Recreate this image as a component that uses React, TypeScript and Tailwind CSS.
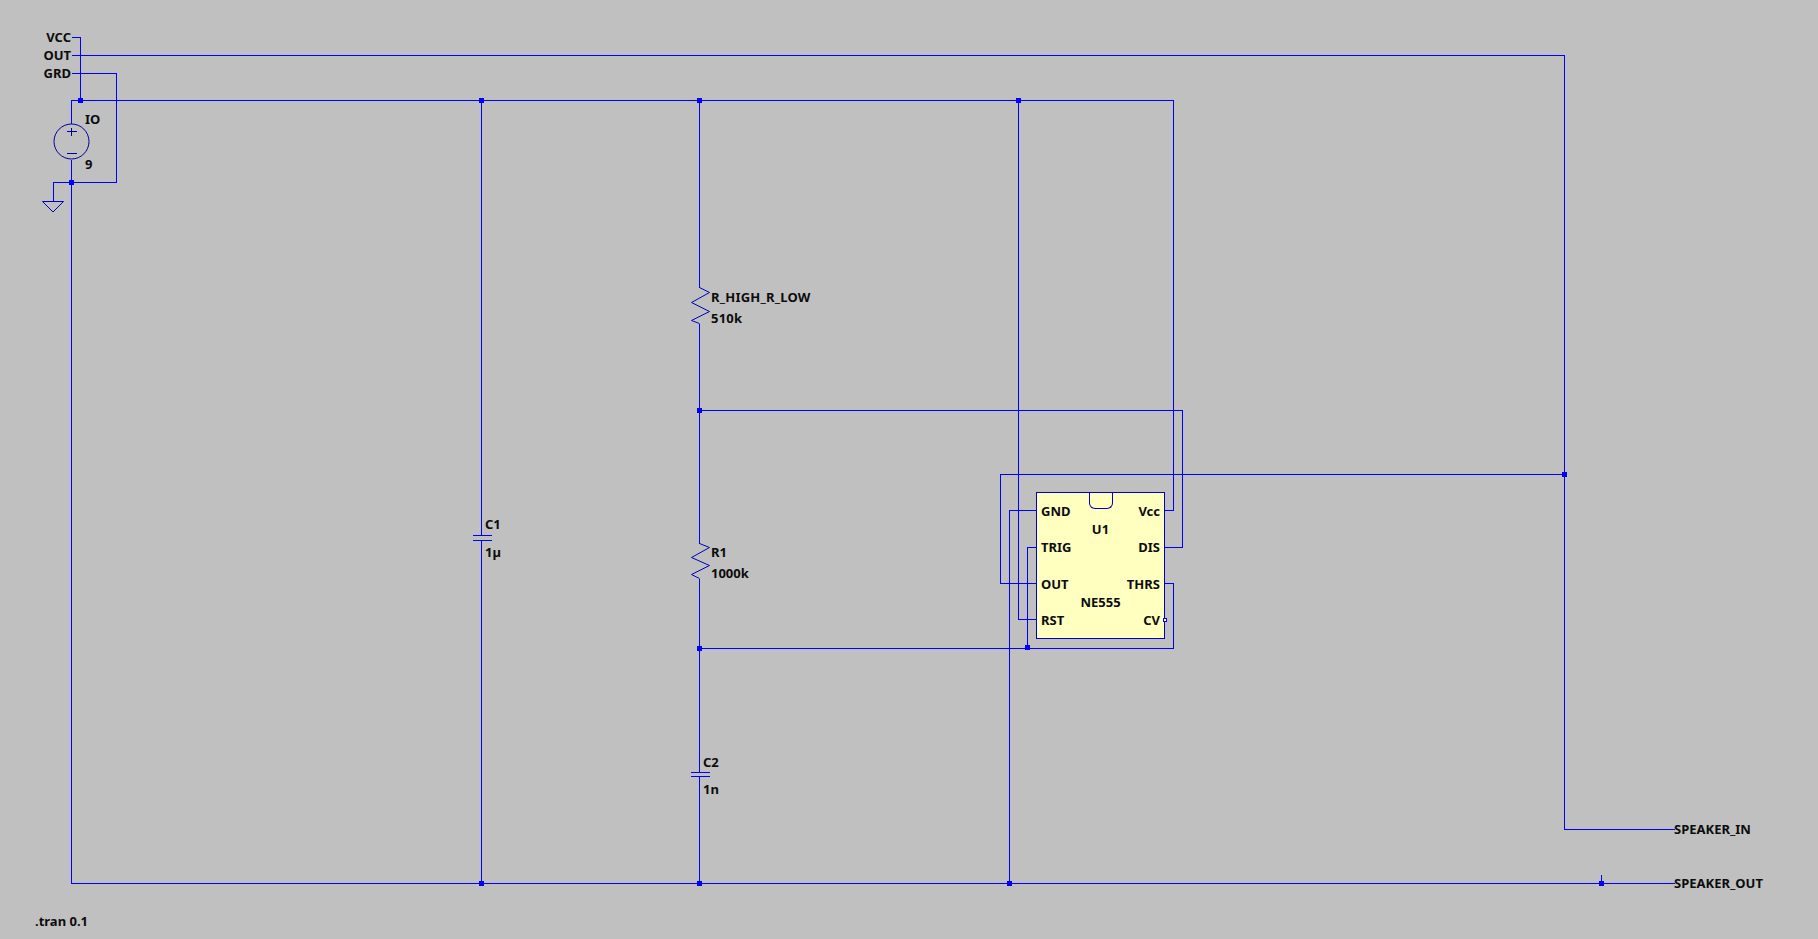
import type { ReactNode } from "react";

// wires as orthogonal polylines, in schematic pixels
const wires = [
  "M71 37H80V100",
  "M71 55H1564V829H1674",
  "M71 73H116V182H53V201",
  "M71 123V100H1173V510H1164",
  "M71 159V883H1674",
  "M481 100V535",
  "M481 540V883",
  "M699 100V287",
  "M699 323V543",
  "M699 578V772",
  "M699 776V883",
  "M1018 100V619H1036",
  "M1036 510H1009V883",
  "M1036 547H1027V647",
  "M1036 583H1000V474H1564",
  "M1164 547H1182V410H699",
  "M1164 583H1173V648H699",
  "M1601 874V883",
  "M472 535H491M472 540H491",
  "M690 772H709M690 776H709",
];

const junctions = [
  [80, 100],
  [481, 100],
  [699, 100],
  [1018, 100],
  [71, 182],
  [699, 410],
  [1564, 474],
  [699, 648],
  [1027, 647],
  [481, 883],
  [699, 883],
  [1009, 883],
  [1601, 883],
];

// part name + value, stacked next to the symbol
const Part = ({ className, lines }: { className: string; lines: string[] }) => (
  <div className={`absolute flex flex-col ${className}`}>
    {lines.map((line) => (
      <span key={line} className="whitespace-nowrap">
        {line}
      </span>
    ))}
  </div>
);

const ChipRow = ({ children }: { children: ReactNode }) => (
  <div className="flex h-[18.25px] items-center justify-between">{children}</div>
);

const Chip = () => (
  <div className="absolute left-[1036px] top-[492px] h-[147px] w-[129px] border border-[#0000c0] bg-[#ffffc0] pl-1 pr-[4px] pt-[8.5px]">
    <div className="absolute left-[52px] top-0 h-[16px] w-[24px] rounded-b-[6px] border border-t-0 border-[#0000c0]" />
    <ChipRow>
      <span>GND</span>
      <span>Vcc</span>
    </ChipRow>
    <ChipRow>
      <span className="w-full text-center">U1</span>
    </ChipRow>
    <ChipRow>
      <span>TRIG</span>
      <span>DIS</span>
    </ChipRow>
    <ChipRow>{null}</ChipRow>
    <ChipRow>
      <span>OUT</span>
      <span>THRS</span>
    </ChipRow>
    <ChipRow>
      <span className="w-full text-center">NE555</span>
    </ChipRow>
    <ChipRow>
      <span>RST</span>
      <span>CV</span>
    </ChipRow>
  </div>
);

const Schematic = () => (
  <svg width="1818" height="939" viewBox="0 0 1818 939" className="absolute inset-0" fill="none">
    <rect x="1163.5" y="618.5" width="3" height="3" fill="#ffffc0" stroke="#0000ff" shapeRendering="crispEdges" />

    <g stroke="#0000ff" shapeRendering="crispEdges" transform="translate(0.5 0.5)">
      {wires.map((d) => (
        <path key={d} d={d} />
      ))}
    </g>

    {/* resistors */}
    <g stroke="#0000c0" transform="translate(0.5 0.5)">
      <path d="M699 287L709 292L691 302L709 311L691 320L699 323" />
      <path d="M699 543L709 547L691 557L709 565L691 574L699 578" />
    </g>

    {/* voltage source */}
    <g stroke="#0000a0" transform="translate(0.5 0.5)">
      <circle cx="71" cy="141" r="17.5" />
      <path d="M66 131H76M71 127V135M66 153H76" shapeRendering="crispEdges" />
    </g>

    {/* ground */}
    <path d="M42.5 201.5H63.5L53 212Z" stroke="#0000c0" />

    <g fill="#0000ff">
      {junctions.map(([x, y]) => (
        <rect key={`${x}-${y}`} x={x - 2} y={y - 2} width="5" height="5" />
      ))}
    </g>
  </svg>
);

const App = () => {
  return (
    <div className="relative h-[939px] w-[1818px] overflow-hidden bg-[#c0c0c0] font-['Noto_Sans',sans-serif] text-[13px] leading-[18px] font-bold text-[#0c0c0c]">
      <Chip />
      <Schematic />

      <Part className="right-[1747px] top-[28px] items-end" lines={["VCC", "OUT", "GRD"]} />
      <Part className="left-[85px] top-[110px] gap-[27px]" lines={["IO", "9"]} />
      <Part className="left-[711px] top-[288px] gap-[3px] tracking-[0.2px]" lines={["R_HIGH_R_LOW", "510k"]} />
      <Part className="left-[711px] top-[543px] gap-[3px]" lines={["R1", "1000k"]} />
      <Part className="left-[485px] top-[515px] gap-[10px]" lines={["C1", "1µ"]} />
      <Part className="left-[703px] top-[753px] gap-[9px]" lines={["C2", "1n"]} />
      <Part className="left-[1674px] top-[820px] gap-[36px]" lines={["SPEAKER_IN", "SPEAKER_OUT"]} />
      <Part className="left-[35px] top-[912px]" lines={[".tran 0.1"]} />
    </div>
  );
};

export default App;
